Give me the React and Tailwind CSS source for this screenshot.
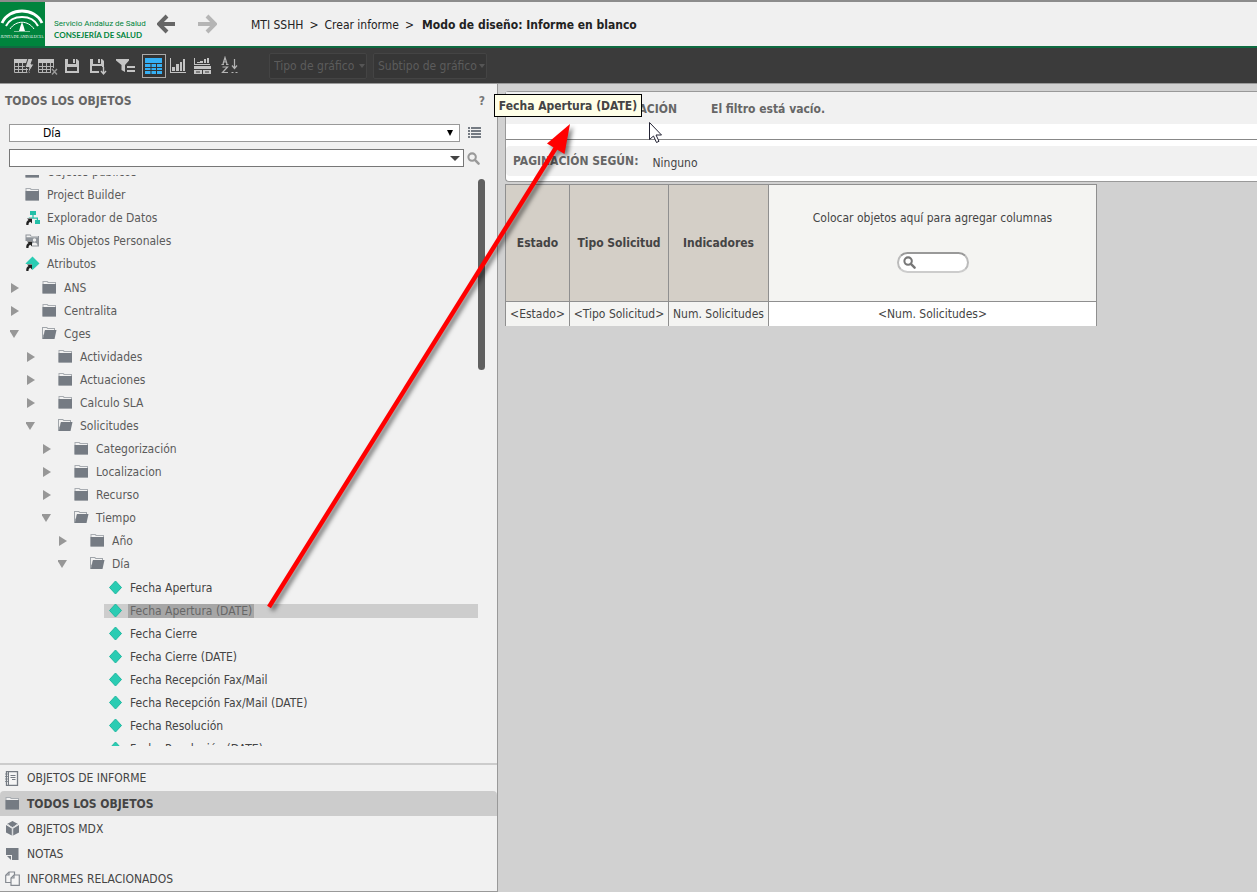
import { useState } from 'react'
import clsx from 'clsx'

const tree = [
    { label: 'Objetos públicos', icon: 'folder' },
    { label: 'Project Builder', icon: 'folder' },
    { label: 'Explorador de Datos', icon: 'explorer' },
    { label: 'Mis Objetos Personales', icon: 'personal' },
    { label: 'Atributos', icon: 'attributes' },
]

const folders = [
    { label: 'ANS' },
    { label: 'Centralita' },
    {
        label: 'Cges', children: [
            { label: 'Actividades' },
            { label: 'Actuaciones' },
            { label: 'Calculo SLA' },
            {
                label: 'Solicitudes', children: [
                    { label: 'Categorización' },
                    { label: 'Localizacion' },
                    { label: 'Recurso' },
                    {
                        label: 'Tiempo', children: [
                            { label: 'Año' },
                            {
                                label: 'Día', items: [
                                    'Fecha Apertura',
                                    'Fecha Apertura (DATE)',
                                    'Fecha Cierre',
                                    'Fecha Cierre (DATE)',
                                    'Fecha Recepción Fax/Mail',
                                    'Fecha Recepción Fax/Mail (DATE)',
                                    'Fecha Resolución',
                                    'Fecha Resolución (DATE)',
                                ],
                            },
                        ],
                    },
                ],
            },
        ],
    },
]

const sections = [
    { label: 'OBJETOS DE INFORME', icon: 'report' },
    { label: 'TODOS LOS OBJETOS', icon: 'folder' },
    { label: 'OBJETOS MDX', icon: 'cube' },
    { label: 'NOTAS', icon: 'note' },
    { label: 'INFORMES RELACIONADOS', icon: 'related' },
]

function Shortcut() {
    return (
        <>
            <path d="M0 8h7v7H0z" fill="#f1f1f1" />
            <path d="M2 8.500h5v5l-1.700-1.700c-1.300.7-1.800 1.500-1.800 3.200H1.300c-.3-2.500.5-4 2.300-4.900z" fill="#222" />
        </>
    )
}

function Icon({ name }) {
    return (
        <svg width="15" height="15" viewBox="0 0 15 15" className="shrink-0" aria-hidden="true">
            {name === 'folder' && (
                <>
                    <path d="M.5 1h5l1 1h7.500v11.500H.5z" fill="#a9adb2" />
                    <path d="M1.500 2h3.500l.8 1h7.200v1H1.500z" fill="#f1f1f1" />
                    <path d="M.5 4H14v9.500H.5z" fill="#757b83" />
                </>
            )}
            {name === 'open' && (
                <>
                    <path d="M0 1h5l1 1h7v3H3L1 13H0z" fill="#a0a5aa" />
                    <path d="M1 2h3.500l1 1H12v1H3L1.500 9H1z" fill="#f1f1f1" />
                    <path d="M3 4h11.500L12.500 13H.8z" fill="#757b83" />
                </>
            )}
            {name === 'explorer' && (
                <>
                    <path d="M5 1h6v4H5zM10 10h5v4h-5zM7.400 5h1.200v2.500h4.400V10h-1.200V8.700H5V10H3.800V7.500h3.600z" fill="#22bfa7" />
                    <Shortcut />
                </>
            )}
            {name === 'personal' && (
                <>
                    <path d="M.5 1.500h5l1 1.500H14v10.500H.5z" fill="#8f949a" />
                    <path d="M1.500 2.500H5l.8 1H13v.8H1.500z" fill="#f1f1f1" />
                    <circle cx="9.500" cy="7" r="1.700" fill="#f1f1f1" />
                    <path d="M6.500 12.500c0-4 6-4 6 0z" fill="#f1f1f1" />
                    <Shortcut />
                </>
            )}
            {name === 'attributes' && (
                <>
                    <path d="M7.500.5l7 7-7 6.500-7-6.500z" fill="#2accb3" />
                    <Shortcut />
                </>
            )}
            {name === 'diamond' && <path d="M7.500 1l6 6.500-6 6.500-6-6.500z" fill="#2accb3" stroke="#1fb8a0" />}
            {name === 'report' && (
                <>
                    <path d="M1.500.7h11v13.600h-11z" fill="#f5f5f5" stroke="#757b83" strokeWidth="1.300" />
                    <path d="M3.500 1v13" stroke="#757b83" />
                    <path d="M0 3h3M0 5.500h3M0 8h3M0 10.500h3" stroke="#757b83" strokeWidth=".8" />
                    <path d="M5.500 4.500h5M5.500 6.500h5M7 8.500h3.500" stroke="#757b83" />
                </>
            )}
            {name === 'cube' && (
                <>
                    <path d="M7.500 0L13 3 7.500 6.200 2 3zM1 4l5.800 3.400v7.200L1 11.500zM14 4L8.200 7.400v7.200L14 11.500z" fill="#757b83" />
                    <path d="M2.500 3l5 4 5-4M7.500 7v8" stroke="#d8dadc" strokeWidth="1" fill="none" />
                </>
            )}
            {name === 'note' && <path d="M1 2h12.500v12H7V9H1zM2 10h4v4z" fill="#757b83" />}
            {name === 'related' && (
                <g fill="#f5f5f5" stroke="#858a91" strokeWidth="1.200">
                    <path d="M4 1h5.500v10.500H.7V4.300z" />
                    <path d="M9 4h5.300v10.300H6V7z" />
                    <path d="M9 4v3H6M4 1v3H1" fill="none" />
                </g>
            )}
        </svg>
    )
}

function GridShape() {
    return (
        <>
            <path d="M1 0h16v4H1z" fill="#c4c4c4" />
            <path d="M1.500 4v9.500h15V4M1 7.500h16M1 10.500h16M5.500 4v10M9.500 4v10M13.500 4v10" stroke="#b4b4b4" fill="none" />
        </>
    )
}

function ToolIcon({ name }) {
    return (
        <svg width="20" height="20" viewBox="0 0 20 20" aria-hidden="true">
            {name === 'run' && (
                <>
                    <g transform="translate(-1 3)"><GridShape /></g>
                    <path d="M14 2.500h5L17 8h3l-6.500 10.500 1.500-7h-4z" fill="#c4c4c4" stroke="#3b3b3b" />
                </>
            )}
            {name === 'clear' && (
                <>
                    <g transform="translate(-1 3)"><GridShape /></g>
                    <path d="M13 12h7v8h-7z" fill="#3b3b3b" />
                    <path d="M14 13l5 5.500M19 13l-5 5.500" stroke="#999" strokeWidth="1.400" />
                </>
            )}
            {name === 'save' && (
                <path d="M3 3h3v5h8V3h1l2 2v12H3zM11 3h2v4h-2zM5 11v4h10v-4z" fill="#c4c4c4" fillRule="evenodd" />
            )}
            {name === 'saveAs' && (
                <>
                    <path d="M2 3h3v5h8V3h1l2 2v6h-2v-1H4v5h7v2H2zM10 3h2v4h-2z" fill="#c4c4c4" fillRule="evenodd" />
                    <path d="M15.500 11v6M13 15l2.500 3 2.500-3" stroke="#c4c4c4" strokeWidth="1.400" fill="none" />
                </>
            )}
            {name === 'filter' && (
                <path d="M0 3h13v1.500L9 9v7L5.500 14V9L0 4.500zM11 10h8v2h-8zM11 14h8v2h-8z" fill="#c4c4c4" />
            )}
            {name === 'grid' && (
                <g transform="translate(1 2)">
                    <path d="M0 0h17v16H0z" fill="#35b0f5" />
                    <path d="M0 5.500h17M0 9.500h17M0 12.500h17M6 5v11M11.500 5v11" stroke="#333" />
                </g>
            )}
            {name === 'chart' && (
                <path d="M2 2h1v14h15v1H2zM4 11h3v4H4zM8 8h3v7H8zM12 6h2v9h-2zM15 3h2v12h-2z" fill="#c4c4c4" />
            )}
            {name === 'chartGrid' && (
                <path d="M2 2h1v6h15v1H2zM5 6h3v1H5zM8 5h3v2H8zM12 3h2v4h-2zM15 2h2v5h-2zM2 10h17v3H2zM2 14h8v4H2zM11 14h8v4h-8zM4 15.500v1h4v-1zM13 15.500v1h4v-1z" fill="#c4c4c4" fillRule="evenodd" />
            )}
            {name === 'sort' && (
                <g stroke="#b4b4b4" fill="none" strokeWidth="1.200">
                    <path d="M3 8l2-6.500L7 8M3.500 6h3M1.500 8.500h2.500M6 8.500h2.500M2.500 11h5l-5 5.500H8" />
                    <path d="M14.500 3v9M12 9.500l2.500 3 2.500-3" />
                    <path d="M11.500 16.500h2M15.500 16.500h2" />
                </g>
            )}
        </svg>
    )
}

const tools = [
    { name: 'run', title: 'Ejecutar informe', size: 'w-6' },
    { name: 'clear', title: 'Borrar', size: 'w-6' },
    { name: 'save', title: 'Guardar', size: 'w-6' },
    { name: 'saveAs', title: 'Guardar como', size: 'w-7' },
    { name: 'filter', title: 'Filtro', size: 'w-7' },
    { name: 'grid', title: 'Cuadrícula', size: 'ml-0.5 w-6 border border-[#aaa] bg-[#333]' },
    { name: 'chart', title: 'Gráfico', size: 'w-6' },
    { name: 'chartGrid', title: 'Cuadrícula y gráfico', size: 'w-6' },
    { name: 'sort', title: 'Ordenar', size: 'ml-1 w-6' },
]

function Magnifier({ size, color }) {
    return (
        <svg width={size} height={size} viewBox="0 0 14 14" className="shrink-0" aria-hidden="true">
            <circle cx="5.500" cy="5.500" r="4" fill="none" stroke={color} strokeWidth="2.200" />
            <path d="M8.500 8.500l4 4" stroke={color} strokeWidth="2.600" strokeLinecap="round" />
        </svg>
    )
}

function ChartSelect({ label, width }) {
    return (
        <div className="relative">
            <select disabled aria-label={label} className={clsx('block h-[26px] appearance-none rounded-xs border border-[#444] bg-[#363636] pt-px pl-1 text-[#5c5c5c] opacity-100', width)}>
                <option>{label}</option>
            </select>
            <svg width="6" height="4" viewBox="0 0 6 4" className="pointer-events-none absolute top-[11px] right-0.5" aria-hidden="true"><path d="M0 0h6L3 4z" fill="#555" /></svg>
        </div>
    )
}

function Leaf({ label, selected, onSelect }) {
    return (
        <li className="flex h-[23px] items-center pl-[104px]">
            <button onClick={onSelect} className={clsx('flex h-[14px] w-[374px] items-center gap-[5px] pl-1 text-left', selected ? 'bg-[#cdcdcd] text-[#666]' : 'text-[#444]')}>
                <Icon name="diamond" />
                <span className={clsx('px-0.5 leading-[14px]', selected && 'bg-[#a6a6a6]')}>{label}</span>
            </button>
        </li>
    )
}

function Folder({ node, selected, onSelect }) {
    const open = node.children || node.items
    return (
        <li>
            <button className="flex h-[23px] items-center text-left text-[#5b5b5b]">
                <svg width="12" height="12" viewBox="0 0 12 12" className="mr-5" aria-hidden="true">
                    <path d={open ? 'M-1 2h10L4 10z' : 'M1 1v10l8-5z'} fill="#979797" />
                </svg>
                <Icon name={open ? 'open' : 'folder'} />
                <span className="ml-[7px]">{node.label}</span>
            </button>
            {node.children && (
                <ul className="pl-4">
                    {node.children.map(c => <Folder key={c.label} node={c} selected={selected} onSelect={onSelect} />)}
                </ul>
            )}
            {node.items && (
                <ul className="-ml-[58px] mt-px">
                    {node.items.map(i => <Leaf key={i} label={i} selected={i === selected} onSelect={() => onSelect(i)} />)}
                </ul>
            )}
        </li>
    )
}

function Logo() {
    return (
        <svg width="45" height="44" viewBox="0 0 45 44" className="shrink-0" role="img" aria-label="Junta de Andalucía">
            <path d="M0 0h45v44H0z" fill="#00843d" />
            <g fill="none" stroke="#fff">
                <path d="M2 21C9 5 35 5 42 21" strokeWidth="2.800" />
                <path d="M6 24C12 12 32 12 38 24" strokeWidth="2" />
                <path d="M10 27C16 18 28 18 34 27" strokeWidth="1" />
            </g>
            <path d="M22 20l1.500 4 1.500 5H19l1.500-5z" fill="#fff" />
            <path d="M14 29.500h16" stroke="#fff" strokeWidth=".5" />
            <text x="22" y="36" textAnchor="middle" fill="#fff" fontSize="4" fontFamily="Liberation Serif, serif">JUNTA DE ANDALUCIA</text>
        </svg>
    )
}

export default function App() {
    const [selected, setSelected] = useState('Fecha Apertura (DATE)')
    const [section, setSection] = useState('TODOS LOS OBJETOS')
    const [search, setSearch] = useState('')

    return (
        <div className="relative flex h-screen flex-col overflow-hidden bg-white pb-0.5 font-['DejaVu_Sans_Condensed','DejaVu_Sans',sans-serif] text-xs text-[#444]">
            <header className="flex h-12 shrink-0 border-t-2 border-b-2 border-t-[#8c8c8c] border-b-[#0f6b41] bg-[#f0f0f0]">
                <Logo />
                <div className="flex w-[104px] flex-col pt-4 pl-[9px] whitespace-nowrap text-[#00843d]">
                    <span className="font-[Roboto,sans-serif] text-[8px] leading-[12px]">Servicio Andaluz de Salud</span>
                    <span className="font-[Lato,sans-serif] text-[8px] leading-[10px] font-bold">CONSEJERÍA DE SALUD</span>
                </div>
                <div className="flex items-center gap-5 pl-2">
                    <button aria-label="Atrás">
                        <svg width="20" height="20" viewBox="0 0 20 20" fill="none" stroke="#666" strokeWidth="4"><path d="M18 10H3M10 2l-8 8 8 8" /></svg>
                    </button>
                    <button aria-label="Adelante">
                        <svg width="20" height="20" viewBox="0 0 20 20" fill="none" stroke="#b5b5b5" strokeWidth="4"><path d="M1 10h16M10 2l8 8-8 8" /></svg>
                    </button>
                </div>
                <nav className="flex items-center pt-0.5 pl-[34px] text-[#222]">
                    <a href="#proyecto">MTI SSHH</a>
                    <span className="px-1.5">&gt;</span>
                    <a href="#crear">Crear informe</a>
                    <span className="pr-2 pl-1.5">&gt;</span>
                    <b>Modo de diseño: Informe en blanco</b>
                </nav>
            </header>

            <div className="flex h-9 shrink-0 items-center border-b border-[#999] bg-[#3b3b3b] pl-3">
                {tools.map(t => (
                    <button key={t.name} title={t.title} className={clsx('flex h-6 items-center justify-center', t.size)}>
                        <ToolIcon name={t.name} />
                    </button>
                ))}
                <div className="ml-[27px] flex gap-1.5">
                    <ChartSelect label="Tipo de gráfico" width="w-[98px]" />
                    <ChartSelect label="Subtipo de gráfico" width="w-[114px]" />
                </div>
            </div>

            <div className="flex min-h-0 flex-1">
                <aside className="flex w-[498px] shrink-0 flex-col border-r border-b border-[#999] bg-[#f1f1f1]">
                    <div className="flex h-8 items-center justify-between pt-px pr-3 pl-[5px] font-bold text-[#666]">
                        <h2>TODOS LOS OBJETOS</h2>
                        <button aria-label="Ayuda" className="text-[#777]">?</button>
                    </div>
                    <div className="flex items-center gap-2 pt-2 pl-[9px]">
                        <div className="relative">
                            <select aria-label="Carpeta" className="block h-[18px] w-[451px] appearance-none border border-[#999] bg-white pl-[33px] leading-[16px] text-black">
                                <option>Día</option>
                            </select>
                            <svg width="8" height="8" viewBox="0 0 8 8" className="pointer-events-none absolute top-[5px] right-1.5" aria-hidden="true"><path d="M1 1h6L4 7z" fill="#000" /></svg>
                        </div>
                        <button aria-label="Vista de lista">
                            <svg width="13" height="12" viewBox="0 0 13 12"><path d="M0 0h2v2H0zM3 0h10v2H3zM0 3h2v2H0zM3 3h10v2H3zM0 6h2v2H0zM3 6h10v2H3zM0 9h2v2H0zM3 9h10v2H3z" fill="#757b83" /></svg>
                        </button>
                    </div>
                    <div className="flex items-center gap-[3px] pt-[7px] pl-[9px]">
                        <div className="flex h-[18px] w-[455px] items-center border border-[#777] bg-white pr-[3px]">
                            <input aria-label="Buscar" value={search} onChange={e => setSearch(e.target.value)} className="min-w-0 flex-1 px-1 outline-none" />
                            <button aria-label="Mostrar opciones">
                                <svg width="10" height="5" viewBox="0 0 10 5"><path d="M0 0h10L5 5z" fill="#444" /></svg>
                            </button>
                        </div>
                        <button aria-label="Iniciar búsqueda"><Magnifier size={13} color="#999" /></button>
                    </div>

                    <div className="relative mt-2 mb-[17px] min-h-0 flex-1 overflow-hidden">
                        <ul className="-mt-[15px]">
                            {tree.map(t => (
                                <li key={t.label} className="flex h-[23px] items-center gap-[7px] pl-[25px] text-[#5b5b5b]">
                                    <Icon name={t.icon} />
                                    {t.label}
                                </li>
                            ))}
                        </ul>
                        <ul className="mt-px pl-2.5">
                            {folders.map(f => <Folder key={f.label} node={f} selected={selected} onSelect={setSelected} />)}
                        </ul>
                        <div className="absolute top-1 right-3 h-[191px] w-[7px] rounded-full bg-[#606060]" />
                    </div>

                    <nav className="border-t-2 border-[#ccc]">
                        {sections.map(s => (
                            <button key={s.label} onClick={() => setSection(s.label)}
                                className={clsx('flex h-[25px] w-full items-center gap-[7px] rounded-t-sm pl-[5px] text-left first:h-[26px]', s.label === section && 'bg-[#ccc] font-bold')}>
                                <Icon name={s.icon} />
                                {s.label}
                            </button>
                        ))}
                    </nav>
                </aside>

                <main className="min-w-0 flex-1 bg-[#d1d1d1] pt-[7px] pl-[7px]">
                    <section className="rounded-l-sm border border-r-0 border-[#999] bg-white pb-[5px]">
                        <div className="flex h-8 items-center gap-[34px] bg-[#f1f1f1] pt-0.5 pl-2 font-bold text-[#666]">
                            <h2 className="w-[163px] text-right">FILTRO DE VISUALIZACIÓN</h2>
                            <span>El filtro está vacío.</span>
                        </div>
                        <div className="mb-1.5 h-4 border-b border-[#888]" />
                        <div className="flex h-[30px] items-center gap-3.5 rounded-l-sm bg-[#f1f1f1] pl-[7px]">
                            <h2 className="font-bold text-[#666]">PAGINACIÓN SEGÚN:</h2>
                            <span className="pt-1">Ninguno</span>
                        </div>
                    </section>

                    <table className="mt-0.5 border-collapse border-x border-t border-[#8f8f8f] text-center">
                        <thead>
                            <tr className="h-[117px]">
                                <th className="w-16 border border-[#8f8f8f] bg-[#d4cfc7]">Estado</th>
                                <th className="w-[99px] border border-[#8f8f8f] bg-[#d4cfc7]">Tipo Solicitud</th>
                                <th className="w-[100px] border border-[#8f8f8f] bg-[#d4cfc7]">Indicadores</th>
                                <td className="w-[328px] border border-[#8f8f8f] bg-[#f4f4f2] pb-1">
                                    <div className="flex flex-col items-center gap-[26px]">
                                        <p>Colocar objetos aquí para agregar columnas</p>
                                        <label className="flex h-[21px] w-[72px] items-center rounded-full border-2 border-t-[#999] border-r-[#bbb] border-b-[#ccc] border-l-[#bbb] bg-white pl-1">
                                            <Magnifier size={13} color="#777" />
                                            <input aria-label="Buscar objetos" className="w-9 outline-none" />
                                        </label>
                                    </div>
                                </td>
                            </tr>
                        </thead>
                        <tbody>
                            <tr className="h-6 whitespace-nowrap">
                                <td className="border-r border-[#8f8f8f] bg-[#f4f4f2]">&lt;Estado&gt;</td>
                                <td className="border-r border-[#8f8f8f] bg-[#f4f4f2]">&lt;Tipo Solicitud&gt;</td>
                                <td className="border-r border-[#8f8f8f] bg-[#f4f4f2]">Num. Solicitudes</td>
                                <td className="bg-white">&lt;Num. Solicitudes&gt;</td>
                            </tr>
                        </tbody>
                    </table>
                </main>
            </div>

            <div role="tooltip" className="absolute top-[94px] left-[494px] flex h-[23px] w-[148px] items-center justify-center border border-black bg-[#ffffe8] pt-px font-bold whitespace-nowrap">
                Fecha Apertura (DATE)
            </div>

            <svg width="700" height="640" viewBox="0 0 700 640" className="pointer-events-none absolute top-0 left-0" aria-hidden="true">
                <g className="drop-shadow-[3px_3px_2px_rgba(0,0,0,0.5)]">
                    <path d="M269 607L557 146" stroke="#f00" strokeWidth="4.500" />
                    <path d="M570 124l-5.500 30-17.500-10.500z" fill="#f00" />
                </g>
                <path d="M649.500 122.500v17l4-3.500 3 6.500 2.500-1.200-3-6.300h5.500z" fill="#fff" stroke="#223" />
            </svg>
        </div>
    )
}
